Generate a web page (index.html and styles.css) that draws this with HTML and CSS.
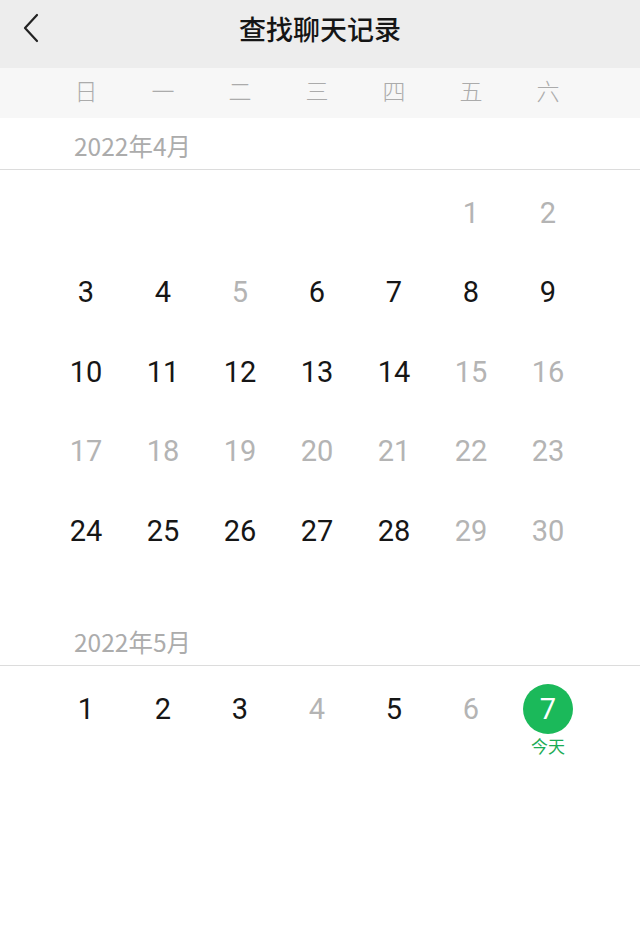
FILE: index.html
```html
<!DOCTYPE html>
<html lang="zh">
<head>
<meta charset="utf-8">
<title>查找聊天记录</title>
<link rel="stylesheet" href="styles.css">
</head>
<body>
<header class="topbar">
  <svg class="back" width="20" height="32" viewBox="0 0 20 32"><polyline points="15,3 3,16 15,29" fill="none" stroke="#222" stroke-width="2.2" stroke-linecap="round" stroke-linejoin="round"/></svg>
  <h1 class="title">查找聊天记录</h1>
</header>
<div class="weekdays">
  <span>日</span><span>一</span><span>二</span><span>三</span><span>四</span><span>五</span><span>六</span>
</div>
<section class="month">
  <div class="month-label">2022年4月</div>
  <div class="grid">
    <span></span><span></span><span></span><span></span><span></span>
    <span class="off">1</span><span class="off">2</span>
    <span>3</span><span>4</span><span class="off">5</span><span>6</span><span>7</span><span>8</span><span>9</span>
    <span>10</span><span>11</span><span>12</span><span>13</span><span>14</span><span class="off">15</span><span class="off">16</span>
    <span class="off">17</span><span class="off">18</span><span class="off">19</span><span class="off">20</span><span class="off">21</span><span class="off">22</span><span class="off">23</span>
    <span>24</span><span>25</span><span>26</span><span>27</span><span>28</span><span class="off">29</span><span class="off">30</span>
  </div>
</section>
<section class="month may">
  <div class="month-label">2022年5月</div>
  <div class="grid">
    <span>1</span><span>2</span><span>3</span><span class="off">4</span><span>5</span><span class="off">6</span>
    <span class="today"><b class="dot">7</b><i class="today-label">今天</i></span>
  </div>
</section>
</body>
</html>
```
FILE: styles.css
```css
html, body {
  margin: 0;
  padding: 0;
  background: #fff;
  font-family: "Roboto", "Noto Sans CJK SC", sans-serif;
}
.topbar {
  height: 68px;
  background: #ededed;
  display: flex;
  align-items: center;
  justify-content: center;
  position: relative;
}
.back {
  position: absolute;
  left: 22px;
  top: 12px;
}
.title {
  margin: 0 0 11px 0;
  font-family: "Noto Sans CJK SC", sans-serif;
  font-size: 27px;
  font-weight: 500;
  color: #151515;
}
.weekdays {
  height: 50px;
  background: #f7f7f7;
  display: grid;
  grid-template-columns: repeat(7, 77px);
  padding-left: 47.5px;
  align-items: center;
}
.weekdays span {
  text-align: center;
  font-family: "Noto Sans CJK SC", sans-serif;
  font-size: 23px;
  font-weight: 300;
  color: #ababab;
  line-height: 1;
  padding-bottom: 5px;
}
.month-label {
  height: 45px;
  padding-top: 6px;
  border-bottom: 1px solid #dcdcdc;
  padding-left: 74px;
  display: flex;
  align-items: center;
  font-family: "Noto Sans CJK SC", sans-serif;
  font-size: 24.5px;
  color: #acacac;
  line-height: 1;
}
.grid {
  display: grid;
  grid-template-columns: repeat(7, 77px);
  grid-auto-rows: 79.5px;
  padding: 3px 0 42px 47.5px;
}
.grid span {
  display: flex;
  align-items: center;
  justify-content: center;
  font-size: 29px;
  color: #161616;
  position: relative;
}
.grid span.off {
  color: #b4b4b4;
}
.may .month-label {
  height: 44px;
  padding-top: 8px;
}
.may .grid {
  padding-top: 4px;
}
.dot {
  width: 50px;
  height: 50px;
  border-radius: 50%;
  background: #1bb95a;
  color: #fff;
  font-weight: 400;
  display: flex;
  align-items: center;
  justify-content: center;
  font-size: 29px;
}
.today-label {
  position: absolute;
  top: 67px;
  left: 0;
  right: 0;
  text-align: center;
  font-style: normal;
  font-family: "Noto Sans CJK SC", sans-serif;
  font-size: 17px;
  color: #1bab55;
  line-height: 1;
}
```
